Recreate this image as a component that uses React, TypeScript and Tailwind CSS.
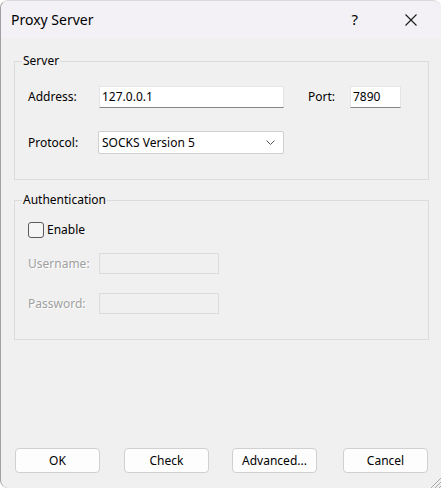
const font = { fontFamily: '"Noto Sans", "Liberation Sans", sans-serif' };

function TextBox({ value, width }: { value: string; width: string }) {
  return (
    <div
      className={`${width} h-[22px] bg-white border border-[#e5e5e5] border-b-[#868686] flex items-center pl-[2px] text-[12px] text-black`}
    >
      {value}
    </div>
  );
}

function DisabledBox() {
  return <div className="w-[120px] h-[21px] border border-[#dcdcdc] bg-[#f0f0f0]" />;
}

function Button({ label, className = "" }: { label: string; className?: string }) {
  return (
    <button
      className={`w-[85px] h-[25px] bg-[#fdfdfd] border border-[#d0d0d0] rounded-[4px] text-[12px] text-black flex items-center justify-center ${className}`}
    >
      {label}
    </button>
  );
}

export default function App() {
  return (
    <div
      className="w-[441px] h-[488px] bg-[#f0f0f0] border-l border-t border-[#a0a0a0] border-t-[#d9d9d9] rounded-tl-[8px] rounded-tr-[8px] rounded-bl-[8px] flex flex-col overflow-hidden relative"
      style={font}
    >
      {/* title bar */}
      <div className="h-[37px] bg-[#f3f1f6] flex items-center pl-[10px] shrink-0">
        <span className="text-[14px] text-black">Proxy Server</span>
        <span className="ml-auto mr-[47px] text-[15px] text-black">?</span>
        <svg width="12" height="12" viewBox="0 0 12 12" className="mr-[24px]">
          <path d="M0.5 0.5 L11.5 11.5 M11.5 0.5 L0.5 11.5" stroke="#1a1a1a" strokeWidth="1.1" />
        </svg>
      </div>

      <div className="flex-1 flex flex-col pl-[13px] pr-[12px]">
        {/* Server */}
        <fieldset className="mt-[15px] border border-[#dcdcdc]">
          <legend className="ml-[7px] px-[1px] text-[12px] leading-[16px] text-black">Server</legend>
          <div className="pt-[17px] pb-[25px] pl-[13px]">
            <div className="flex items-center h-[22px]">
              <span className="w-[71px] text-[12px] text-black">Address:</span>
              <TextBox value="127.0.0.1" width="w-[185px]" />
              <span className="ml-[24px] w-[42px] text-[12px] text-black">Port:</span>
              <TextBox value="7890" width="w-[51px]" />
            </div>
            <div className="flex items-center h-[23px] mt-[23px]">
              <span className="w-[70px] text-[12px] text-black">Protocol:</span>
              <div className="w-[186px] h-[23px] bg-white border border-[#d0d0d0] rounded-[2px] flex items-center pl-[3px] pr-[8px] text-[12px] text-black">
                <span>SOCKS Version 5</span>
                <svg width="9" height="5" viewBox="0 0 9 5" className="ml-auto">
                  <path d="M0.5 0.5 L4.5 4.5 L8.5 0.5" stroke="#555" strokeWidth="1" fill="none" />
                </svg>
              </div>
            </div>
          </div>
        </fieldset>

        {/* Authentication */}
        <fieldset className="mt-[12px] border border-[#dcdcdc]">
          <legend className="ml-[7px] px-[1px] text-[12px] leading-[16px] text-black">Authentication</legend>
          <div className="pt-[14px] pb-[25px] pl-[13px]">
            <div className="flex items-center h-[16px]">
              <div className="w-[16px] h-[16px] border border-[#5a5a5a] rounded-[3px] bg-[#f5f5f5]" />
              <span className="ml-[3px] text-[12px] text-black">Enable</span>
            </div>
            <div className="flex items-center h-[21px] mt-[15px]">
              <span className="w-[71px] text-[12px] text-[#a0a0a0] [text-shadow:1px_1px_0_#ffffff]">Username:</span>
              <DisabledBox />
            </div>
            <div className="flex items-center h-[21px] mt-[19px]">
              <span className="w-[71px] text-[12px] text-[#a0a0a0] [text-shadow:1px_1px_0_#ffffff]">Password:</span>
              <DisabledBox />
            </div>
          </div>
        </fieldset>

        <div className="flex-1" />

        <div className="flex pl-[1px] mb-[15px]">
          <Button label="OK" />
          <Button label="Check" className="ml-[24px]" />
          <Button label="Advanced..." className="ml-[23px]" />
          <Button label="Cancel" className="ml-[26px]" />
        </div>
      </div>

      {/* size grip */}
      <svg width="12" height="12" viewBox="0 0 12 12" className="absolute right-0 bottom-0">
        <path d="M12 2 L2 12 M12 6 L6 12 M12 10 L10 12" stroke="#a8a8a8" strokeWidth="1" />
      </svg>
    </div>
  );
}
